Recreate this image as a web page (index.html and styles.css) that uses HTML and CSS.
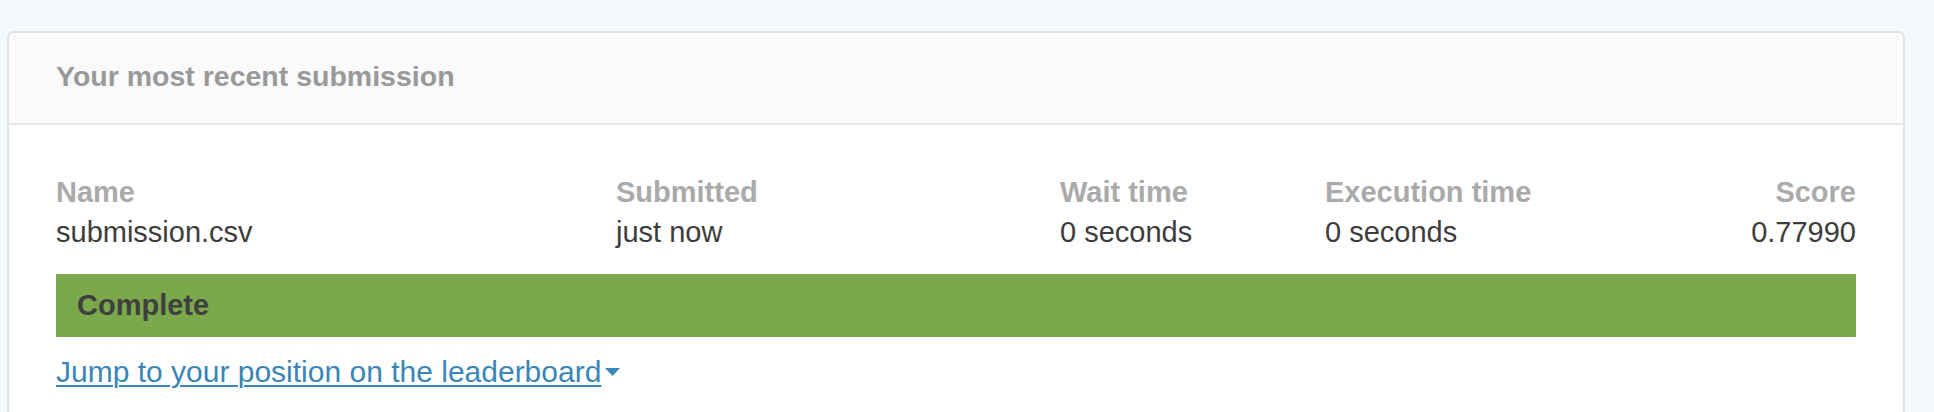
FILE: index.html
```html
<!DOCTYPE html>
<html lang="en">
<head>
<meta charset="utf-8">
<title>Your most recent submission</title>
<link rel="stylesheet" href="styles.css">
</head>
<body>
<section class="card">
  <header class="card-header">
    <h2 class="card-title">Your most recent submission</h2>
  </header>
  <div class="card-body">
    <div class="stats">
      <div class="stat">
        <div class="stat-label">Name</div>
        <div class="stat-value">submission.csv</div>
      </div>
      <div class="stat">
        <div class="stat-label">Submitted</div>
        <div class="stat-value">just now</div>
      </div>
      <div class="stat">
        <div class="stat-label">Wait time</div>
        <div class="stat-value">0 seconds</div>
      </div>
      <div class="stat">
        <div class="stat-label">Execution time</div>
        <div class="stat-value">0 seconds</div>
      </div>
      <div class="stat stat-right">
        <div class="stat-label">Score</div>
        <div class="stat-value">0.77990</div>
      </div>
    </div>
    <div class="status-bar">Complete</div>
    <a class="jump-link" href="#leaderboard"><span class="jump-text">Jump to your position on the leaderboard</span><svg class="caret" width="15" height="8" viewBox="0 0 15 8" aria-hidden="true"><path d="M0 0 H15 L7.5 8 Z" fill="currentColor"/></svg></a>
  </div>
</section>
</body>
</html>
```
FILE: styles.css
```css
html, body {
  margin: 0;
  padding: 0;
}

body {
  background: #f5f8fa;
  font-family: "Liberation Sans", Arial, sans-serif;
  height: 412px;
  overflow: hidden;
}

.card {
  margin: 31px 29px 0 7px;
  background: #ffffff;
  border: 2px solid #dfe2e5;
  border-radius: 6px;
  height: 420px;
}

.card-header {
  background: #fafafa;
  border-bottom: 2px solid #e8e8e8;
  border-radius: 6px 6px 0 0;
  padding: 26px 47px 0;
  height: 64px;
}

.card-title {
  margin: 0;
  font-size: 28.5px;
  line-height: 35px;
  font-weight: 700;
  color: #999999;
}

.card-body {
  padding: 47px 47px 0;
}

.stats {
  display: grid;
  grid-template-columns: 560px 444px 265px 1fr 1fr;
}

.stat-label {
  font-size: 29px;
  line-height: 40px;
  font-weight: 700;
  color: #aaaaaa;
}

.stat-value {
  font-size: 29px;
  line-height: 40px;
  color: #3d3d3d;
}

.stat-right {
  text-align: right;
}

.status-bar {
  margin-top: 22px;
  height: 63px;
  background: #7aa84a;
  color: #3f3f3f;
  font-size: 29px;
  line-height: 63px;
  font-weight: 700;
  padding-left: 21px;
}

.jump-link {
  display: inline-flex;
  align-items: center;
  margin-top: 15px;
  font-size: 30px;
  line-height: 40px;
  color: #3a86b7;
  text-decoration: none;
}

.jump-text {
  text-decoration: underline;
  text-decoration-thickness: 2px;
  text-underline-offset: 3px;
}

.caret {
  margin-left: 4px;
  margin-top: 0;
}
```
